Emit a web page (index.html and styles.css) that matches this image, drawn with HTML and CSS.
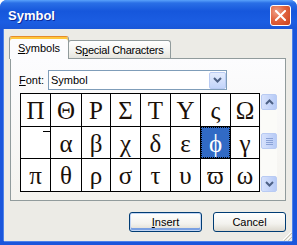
FILE: index.html
```html
<!DOCTYPE html>
<html lang="en">
<head>
  <meta charset="UTF-8" />
  <title>Symbol</title>
  <link rel="stylesheet" href="styles.css">
</head>
<body>
  <div class="window">
    <div class="titlebar">
      <span class="title">Symbol</span>
      <button class="close">
        <svg width="11" height="11" viewBox="0 0 11 11"><path d="M1 1L10 10M10 1L1 10" stroke="#fff" stroke-width="2" stroke-linecap="square"/></svg>
      </button>
    </div>

    <div class="client">
      <div class="tabs">
        <div class="tab active"><u>S</u>ymbols</div>
        <div class="tab">S<u>p</u>ecial Characters</div>
      </div>

      <div class="pane">
        <div class="font-row">
          <label class="label"><u>F</u>ont:</label>
          <div class="combo">
            <span class="combo-text">Symbol</span>
            <span class="drop">
              <svg width="9" height="6" viewBox="0 0 9 6"><path d="M1 1L4.5 4.5L8 1" fill="none" stroke="#4d6185" stroke-width="2"/></svg>
            </span>
          </div>
        </div>

        <div class="chars">
          <div class="grid">
            <div class="cell">Π</div>
            <div class="cell">Θ</div>
            <div class="cell">Ρ</div>
            <div class="cell">Σ</div>
            <div class="cell">Τ</div>
            <div class="cell">Υ</div>
            <div class="cell">ς</div>
            <div class="cell">Ω</div>
            <div class="cell ext"><span class="bar"></span></div>
            <div class="cell">α</div>
            <div class="cell">β</div>
            <div class="cell">χ</div>
            <div class="cell">δ</div>
            <div class="cell">ε</div>
            <div class="cell selected">ϕ</div>
            <div class="cell">γ</div>
            <div class="cell">π</div>
            <div class="cell">θ</div>
            <div class="cell">ρ</div>
            <div class="cell">σ</div>
            <div class="cell">τ</div>
            <div class="cell">υ</div>
            <div class="cell">ϖ</div>
            <div class="cell">ω</div>
          </div>

          <div class="scrollbar">
            <div class="sb-btn">
              <svg width="9" height="6" viewBox="0 0 9 6"><path d="M1 5L4.5 1.5L8 5" fill="none" stroke="#4d6185" stroke-width="2"/></svg>
            </div>
            <div class="sb-track">
              <div class="sb-thumb"><span></span><span></span><span></span><span></span></div>
            </div>
            <div class="sb-btn">
              <svg width="9" height="6" viewBox="0 0 9 6"><path d="M1 1L4.5 4.5L8 1" fill="none" stroke="#4d6185" stroke-width="2"/></svg>
            </div>
          </div>
        </div>
      </div>

      <div class="buttons">
        <button class="btn default"><u>I</u>nsert</button>
        <button class="btn">Cancel</button>
      </div>

      <svg class="grip" width="12" height="12" viewBox="0 0 12 12">
        <path d="M11 3L3 11M11 7L7 11" stroke="#fff" stroke-width="1"/>
        <path d="M12 4L4 12M12 8L8 12" stroke="#c5c2b2" stroke-width="1"/>
      </svg>
    </div>
  </div>
</body>
</html>
```

FILE: styles.css
```css
* {
  box-sizing: border-box;
  margin: 0;
  padding: 0;
}
body {
  background: #fff;
  font-family: 'Liberation Sans', Arial, sans-serif;
  font-size: 11px;
  color: #000;
}
.window {
  width: 297px;
  height: 245px;
  display: flex;
  flex-direction: column;
  background: #1a56dc;
  border-radius: 7px 7px 0 0;
  overflow: hidden;
}
.titlebar {
  height: 29px;
  flex: none;
  display: flex;
  align-items: center;
  justify-content: space-between;
  padding: 0 6px 0 8px;
  background: linear-gradient(#5aa2fb 0, #2a6fe6 3px, #1657dc 11px, #1b5de2 22px, #1a57d8 29px);
}
.title {
  color: #fff;
  font-weight: bold;
  font-size: 13px;
  text-shadow: 1px 1px 0 #0b2a9a;
  margin-top: 1px;
}
.close {
  width: 21px;
  height: 21px;
  margin-top: 2px;
  border: 1px solid #fff;
  border-radius: 3px;
  background: radial-gradient(circle at 30% 30%, #f0a088 0, #e1643f 45%, #c8401b 100%);
  display: flex;
  align-items: center;
  justify-content: center;
}
.client {
  flex: 1;
  position: relative;
  margin: 0 5px 4px 4px;
  padding: 7px 6px 0 6px;
  background: #ecebe6;
  box-shadow: -1px 0 0 #4d82ea, 1px 0 0 #4d82ea, 0 1px 0 #4d82ea;
}
.tabs {
  height: 22px;
  display: flex;
  align-items: flex-end;
  margin-left: -1px;
}
.tab {
  height: 18px;
  padding: 0 6px;
  display: flex;
  align-items: center;
  white-space: nowrap;
  border: 1px solid #919b9c;
  border-bottom: none;
  border-radius: 3px 3px 0 0;
  background: linear-gradient(#fff, #f3f3ef 60%, #e5e4de);
  margin-left: -1px;
}
.tab.active {
  position: relative;
  z-index: 1;
  width: 60px;
  height: 23px;
  margin-bottom: -1px;
  justify-content: center;
  padding: 0;
  margin-left: 0;
  background: #fcfcfe;
  border-top: 1px solid #e68b2c;
  box-shadow: inset 0 2px 0 #ffc73c;
}
.tab.active + .tab {
  margin-left: -1px;
  width: 103px;
  padding: 0 0 0 6px;
  letter-spacing: -0.25px;
}
.pane {
  height: 143px;
  border: 1px solid #919b9c;
  background: linear-gradient(#fcfcfe, #f4f3ee);
  padding: 11px 8px 0 8px;
}
.font-row {
  display: flex;
  align-items: center;
  height: 20px;
}
.label {
  width: 29px;
}
.combo {
  width: 179px;
  height: 20px;
  border: 1px solid #7f9db9;
  background: #fff;
  display: flex;
  align-items: center;
  justify-content: space-between;
  padding: 0 0 0 2px;
}
.drop {
  width: 17px;
  height: 17px;
  border: 1px solid #b9cbf3;
  border-radius: 2px;
  background: linear-gradient(#e4ecfd, #c2d4fa);
  display: flex;
  align-items: center;
  justify-content: center;
}
.chars {
  display: flex;
  gap: 1px;
  margin-top: 3px;
  margin-left: 1px;
}
.grid {
  display: grid;
  grid-template-columns: 29px 30px 28px 29px 29px 29px 29px 28px;
  grid-template-rows: 32px 31px 32px;
  gap: 1px;
  padding: 1px;
  background: #000;
}
.cell {
  background: #fff;
  display: flex;
  align-items: center;
  justify-content: center;
  padding-top: 1px;
  font-family: 'Liberation Serif', 'DejaVu Serif', serif;
  font-size: 25px;
  line-height: 1;
  color: #1a1008;
}
.cell.ext {
  align-items: flex-start;
  justify-content: flex-end;
  padding-top: 4px;
}
.bar {
  width: 7px;
  border-top: 1px solid #000;
}
.cell.selected {
  background: #316ac5;
  color: #fff;
  outline: 1px dotted #000;
  outline-offset: -1px;
}
.scrollbar {
  width: 16px;
  height: 98px;
  margin-top: 1px;
  display: flex;
  flex-direction: column;
  background: #fbfbf8;
}
.sb-btn, .sb-thumb {
  height: 16px;
  border: 1px solid #b9cbf3;
  border-radius: 2px;
  background: linear-gradient(90deg, #d7e2fc, #c4d4f9 60%, #b7cbf6);
  display: flex;
  align-items: center;
  justify-content: center;
}
.sb-track {
  flex: 1;
  padding-top: 23px;
}
.sb-thumb {
  flex-direction: column;
  gap: 1px;
}
.sb-thumb span {
  width: 7px;
  height: 1px;
  background: #8aa2d6;
}
.buttons {
  display: flex;
  justify-content: flex-end;
  gap: 11px;
  margin-top: 11px;
}
.btn {
  width: 73px;
  height: 20px;
  border: 1px solid #003c74;
  border-radius: 3px;
  background: linear-gradient(#fff, #f3f2ee 60%, #dcd8ce);
  font-family: 'Liberation Sans', Arial, sans-serif;
  font-size: 11px;
  color: #000;
}
.btn.default {
  box-shadow: inset 0 0 0 1px #c2d5f4, inset 0 -2px 0 1px #7aa0e2;
}
.grip {
  position: absolute;
  right: 0;
  bottom: 0;
}
```
